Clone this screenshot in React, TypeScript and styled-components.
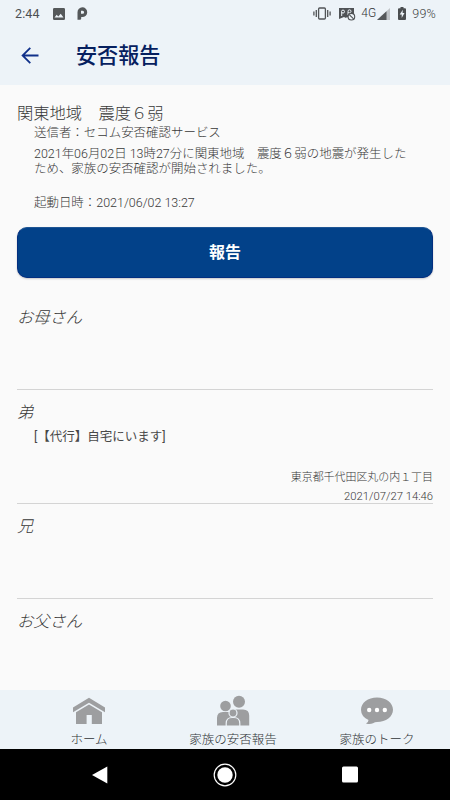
import React from "react";
import styled, { createGlobalStyle } from "styled-components";

const Global = createGlobalStyle`
  * { box-sizing: border-box; }
  body { margin: 0; background: #fafafa; }
`;

const Screen = styled.div`
  width: 450px;
  height: 800px;
  display: flex;
  flex-direction: column;
  overflow: hidden;
  background: #fafafa;
  color: #383838;
  font-family: Roboto, "Noto Sans CJK JP", sans-serif;
  font-weight: 300;
  white-space: nowrap;
  text-spacing-trim: space-all;
`;

const Header = styled.header`
  height: 85px;
  flex: none;
  background: #edf3f8;
`;

const StatusBar = styled.div`
  height: 27px;
  display: flex;
  justify-content: space-between;
  padding: 0 14px 0 15px;
  color: #4c4f52;
  font-size: 12.5px;
  line-height: 27px;
  font-weight: 400;
`;

const StatusGroup = styled.div`
  display: flex;
  align-items: center;
`;

const Clock = styled.span`
  width: 38px;
  letter-spacing: 0.1px;
`;

const Network = styled.span`
  width: 16px;
  font-size: 12px;
  font-weight: 300;
  color: #303235;
`;

const Percent = styled.span`
  font-weight: 300;
  font-size: 12.5px;
  letter-spacing: 0.2px;
  color: #3c3f42;
`;

const Glyph = styled.svg<{ $gap?: number }>`
  display: block;
  flex: none;
  margin-right: ${(p) => p.$gap ?? 0}px;
`;

const TitleBar = styled.div`
  height: 58px;
  display: flex;
  align-items: center;
  padding-left: 21px;
  gap: 37px;
`;

const Title = styled.h1`
  margin: 0;
  font-size: 21.1px;
  line-height: 30px;
  font-weight: 500;
  color: #06205f;
`;

const Content = styled.main`
  flex: 1;
  min-height: 0;
  padding: 17px 17px 0;
  overflow: hidden;
`;

const Heading = styled.h2`
  margin: 0 0 -1px;
  font-size: 16.3px;
  line-height: 24px;
  font-weight: 300;
`;

const Details = styled.div`
  padding-left: 17px;
  font-size: 12.46px;
  line-height: 15px;
`;

const Paragraph = styled.p<{ $top?: number }>`
  margin: ${(p) => p.$top ?? 0}px 0 0;
`;

const ReportButton = styled.button`
  display: block;
  width: 100%;
  height: 51px;
  margin: 17px 0 17px;
  padding: 0;
  border: 1px solid #032f80;
  border-top-color: #1e5593;
  border-radius: 10px;
  background: #024189;
  box-shadow: 0 1px 2px rgba(0, 0, 0, 0.2);
  color: #fff;
  font: 700 16px/24px Roboto, "Noto Sans CJK JP", sans-serif;
`;

const Member = styled.section<{ $height: number; $last?: boolean }>`
  height: ${(p) => p.$height}px;
  padding-top: 11px;
  display: flex;
  flex-direction: column;
  border-bottom: ${(p) => (p.$last ? "none" : "1px solid #d4d4d4")};
`;

const Name = styled.h3`
  margin: 0;
  font-size: 16.3px;
  line-height: 24px;
  font-style: italic;
  font-weight: 300;
`;

const Message = styled.div`
  padding: 4px 0 0 17px;
  font-size: 12.5px;
  line-height: 16px;
  font-weight: 400;
  color: #484848;
`;

const Meta = styled.div`
  margin-top: auto;
  margin-bottom: -3px;
  text-align: right;
  font-size: 10.95px;
  line-height: 19px;
`;

const Timestamp = styled.div`
  font-size: 11.25px;
`;

const Tabs = styled.nav`
  height: 59px;
  flex: none;
  display: grid;
  grid-template-columns: repeat(3, 144px);
  padding-left: 17px;
  background: #edf3f8;
`;

const Tab = styled.div`
  display: flex;
  flex-direction: column;
  align-items: center;
  padding-top: 5px;
  font-size: 12.5px;
  line-height: 18px;
  color: #303337;
`;

const TabIcon = styled.svg`
  display: block;
  margin-bottom: 2px;
  fill: #9d9ea0;
`;

const SystemBar = styled.footer`
  height: 51px;
  flex: none;
  display: grid;
  grid-template-columns: repeat(3, 125px);
  justify-content: center;
  place-items: center;
  background: #000;
`;

const members = [
  { name: "お母さん", height: 95 },
  {
    name: "弟",
    height: 114,
    message: "[【代行】自宅にいます]",
    place: "東京都千代田区丸の内１丁目",
    time: "2021/07/27 14:46",
  },
  { name: "兄", height: 95 },
  { name: "お父さん", height: 91 },
];

export default function App() {
  return (
    <Screen>
      <Global />
      <Header>
        <StatusBar>
          <StatusGroup>
            <Clock>2:44</Clock>
            <Glyph width="12" height="12" viewBox="0 0 12 12" $gap={12}>
              <path fill="#55585a" fillRule="evenodd" d="M1.3 0h9.4Q12 0 12 1.3v9.4q0 1.3-1.3 1.3H1.3Q0 12 0 10.7V1.3Q0 0 1.3 0M1.5 9.5h9L7.7 5.8 5.3 8.6 3.7 6.8z" />
            </Glyph>
            <Glyph width="11" height="13" viewBox="0 0 11 13">
              <path fill="#55585a" fillRule="evenodd" d="M5.3.3a4.900 4.900 0 0 1 0 9.800H4.200v1.400q0 1.300-1.300 1.300H.5V5.200A4.900 4.900 0 0 1 5.300.3M4 3.700v3h1.600a1.500 1.500 0 0 0 0-3z" />
            </Glyph>
          </StatusGroup>
          <StatusGroup>
            <Glyph width="18" height="13" viewBox="0 0 18 13" $gap={8} fill="none" stroke="#515457" strokeWidth="1.300">
              <rect x="5.600" y="1" width="6.800" height="11" rx="1" />
              <path d="M3.300 3v7M.9 4.500v4M14.700 3v7M17.100 4.500v4" />
            </Glyph>
            <Glyph width="17" height="14" viewBox="0 0 17 14" $gap={5}>
              <path fill="#505356" d="M0 1h15v7l-4 4-3-2-1 1-2-1-5 2z" />
              <circle cx="4" cy="4.600" r="1.500" fill="none" stroke="#edf3f8" />
              <circle cx="10.500" cy="4.300" r="1.500" fill="none" stroke="#edf3f8" />
              <path d="M2.700 9V5M9 8V5" stroke="#edf3f8" />
              <circle cx="12.400" cy="9.700" r="3.300" fill="#edf3f8" stroke="#505356" strokeWidth="1.100" />
              <path d="m10.200 7.600 4.400 4.200" stroke="#505356" strokeWidth="1.100" />
            </Glyph>
            <Network>4G</Network>
            <Glyph width="13" height="12" viewBox="0 0 13 12" $gap={8}>
              <path fill="#bfc3c7" d="M13 0v12H0z" />
              <path fill="#55585a" d="M9.500 3.300V12H0z" />
            </Glyph>
            <Glyph width="8" height="13" viewBox="0 0 8 13" $gap={6}>
              <path fill="#4b4e50" d="M2.500 0h3v1.300H7q1 0 1 1V12q0 1-1 1H1q-1 0-1-1V2.300q0-1 1-1h1.500z" />
              <path fill="#edf3f8" d="M4.800 2.800 1.700 7.600h2v3.300l2.800-5H4.600z" />
            </Glyph>
            <Percent>99%</Percent>
          </StatusGroup>
        </StatusBar>
        <TitleBar>
          <Glyph width="18" height="18" viewBox="0 0 18 18" fill="none" stroke="#10308a" strokeWidth="1.800">
            <path d="M17.500 8.500H2M9.300.8 1.600 8.500l7.700 7.700" />
          </Glyph>
          <Title>安否報告</Title>
        </TitleBar>
      </Header>
      <Content>
        <Heading>関東地域　震度６弱</Heading>
        <Details>
          <Paragraph>送信者：セコム安否確認サービス</Paragraph>
          <Paragraph $top={6}>
            2021年06月02日 13時27分に関東地域　震度６弱の地震が発生した
            <br />
            ため、家族の安否確認が開始されました。
          </Paragraph>
          <Paragraph $top={19}>起動日時：2021/06/02 13:27</Paragraph>
        </Details>
        <ReportButton>報告</ReportButton>
        {members.map((m, i) => (
          <Member key={m.name} $height={m.height} $last={i === members.length - 1}>
            <Name>{m.name}</Name>
            {m.message && <Message>{m.message}</Message>}
            {m.place && (
              <Meta>
                <div>{m.place}</div>
                <Timestamp>{m.time}</Timestamp>
              </Meta>
            )}
          </Member>
        ))}
      </Content>
      <Tabs>
        <Tab>
          <TabIcon width="34" height="34" viewBox="0 0 34 34">
            <path d="m17 2.800 16 9.700v4.700L17 7.700 1 17.200v-4.700z" />
            <path d="m17 9.400 13 7.800V29H19.800v-9h-5.200v9H4V17.200z" />
          </TabIcon>
          ホーム
        </Tab>
        <Tab>
          <TabIcon width="34" height="34" viewBox="0 0 34 34">
            <circle cx="23" cy="6.800" r="6" />
            <circle cx="9.500" cy="11" r="5.300" />
            <path d="M1 30.500V23q0-6 6-6h7v13.500zM14 30.500V20q0-5.500 6.500-5.500H27q6.200 0 6.200 6v10z" />
            <circle cx="17" cy="18" r="4" stroke="#edf3f8" strokeWidth="1.200" />
            <path d="M10.200 31v-2.500q0-6 6-6h1.600q6 0 6 6V31z" stroke="#edf3f8" strokeWidth="1.200" />
          </TabIcon>
          家族の安否報告
        </Tab>
        <Tab>
          <TabIcon width="34" height="34" viewBox="0 0 34 34">
            <path d="M17 2.500c9 0 16 5.300 16 12.200S26 27 17 27q-2 0-4 1.200-3 1.500-7 .3 2.500-1.200 2.500-3.500Q1 21.500 1 14.700C1 7.800 8 2.500 17 2.500" />
            <g fill="#fff"><circle cx="9.200" cy="15" r="2.200" /><circle cx="17" cy="15" r="2.200" /><circle cx="24.800" cy="15" r="2.200" /></g>
          </TabIcon>
          家族のトーク
        </Tab>
      </Tabs>
      <SystemBar>
        <svg width="16" height="18" viewBox="0 0 16 18">
          <path d="M15.300.5v17L0 9z" fill="#fff" />
        </svg>
        <svg width="24" height="24" viewBox="0 0 24 24">
          <circle cx="12" cy="12" r="10.800" fill="none" stroke="#fff" strokeWidth="1.200" />
          <circle cx="12" cy="12" r="7.700" fill="#fff" />
        </svg>
        <svg width="16" height="17" viewBox="0 0 16 17">
          <rect y=".5" width="16" height="16" rx="1.500" fill="#fff" />
        </svg>
      </SystemBar>
    </Screen>
  );
}
